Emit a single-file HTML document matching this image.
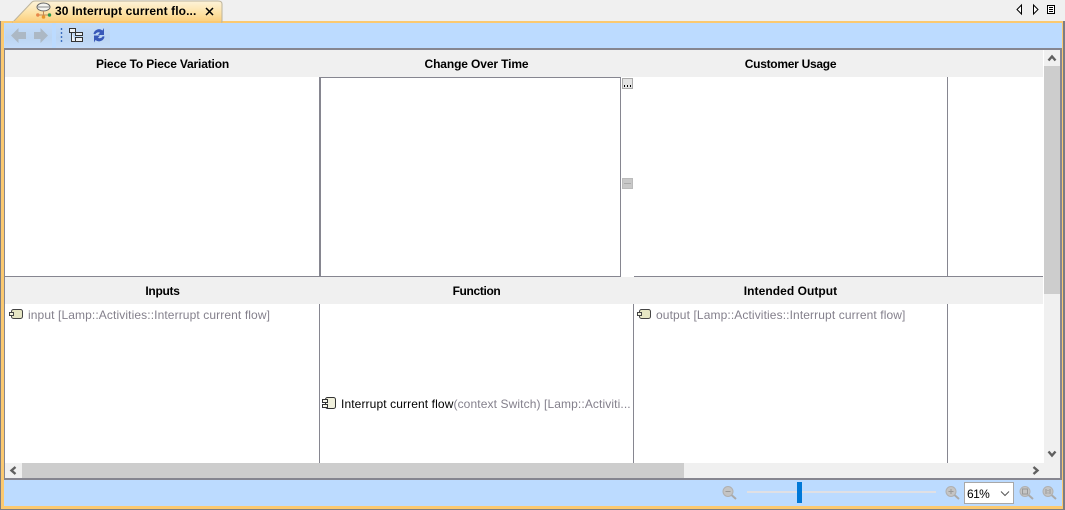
<!DOCTYPE html>
<html><head><meta charset="utf-8"><style>
html,body{margin:0;padding:0}
body{width:1065px;height:510px;overflow:hidden;position:relative;background:#f0f0f0;font-family:"Liberation Sans",sans-serif}
.a{position:absolute}
.h{position:absolute;font-weight:bold;font-size:12px;color:#000;text-align:center;line-height:14px;white-space:nowrap}
.t{position:absolute;font-size:12px;line-height:14px;color:#84808c;white-space:nowrap;letter-spacing:.11px}
.l{position:absolute;background:#868690}
svg{position:absolute;overflow:visible}
</style></head><body>
<!-- frame -->
<div class="a" style="left:0;top:21px;width:1065px;height:489px;background:#7c7c84"></div>
<div class="a" style="left:1px;top:21px;width:1062px;height:488px;background:#fbc970"></div>
<div class="a" style="left:4px;top:23px;width:1058px;height:483px;background:#bcdbff"></div>
<!-- tab -->
<svg style="left:0;top:0" width="240" height="24"><defs><linearGradient id="g" x1="0" y1="0" x2="0" y2="1"><stop offset="0" stop-color="#fdf3da"/><stop offset=".55" stop-color="#fde3a8"/><stop offset="1" stop-color="#fbcf7c"/></linearGradient></defs><path d="M13 22 L32 2 Q33 1 35 1 L218 1 Q222 1 222 4 L222 22 Z" fill="url(#g)" stroke="#bdb49c"/><path d="M13 21 L221 21 L221 23 L13 23Z" fill="#fbc970"/></svg>
<div class="a" style="left:55px;top:4px;font-size:12px;font-weight:bold;line-height:14px;white-space:nowrap;color:#000;letter-spacing:.1px">30 Interrupt current flo...</div>
<svg style="left:36px;top:2px" width="18" height="18"><ellipse cx="7.500" cy="5" rx="6.500" ry="4" fill="#f4f4f0" stroke="#666"/><path d="M2 5h11" stroke="#888"/><path d="M7.500 9v5M2 13h11" stroke="#c08a5a"/><circle cx="1.800" cy="13" r="1.700" fill="#e8884a"/><circle cx="13.500" cy="13" r="1.700" fill="#2d9a4e"/><circle cx="7.500" cy="15" r="1.800" fill="#e8962a"/></svg>
<svg style="left:205px;top:7px" width="9" height="9"><path d="M1 1L8 8M8 1L1 8" stroke="#000" stroke-width="1.500"/></svg>
<svg style="left:1016px;top:4px" width="40" height="11"><path d="M5.500 1v9L1 5.500z" fill="#fff" stroke="#000"/><path d="M17.500 1v9L22 5.500z" fill="#fff" stroke="#000"/><rect x="31.500" y="1.500" width="7" height="8" fill="#fff" stroke="#000"/><path d="M33 3.500h4M33 5.500h4M33 7.500h4" stroke="#000"/></svg>
<!-- toolbar -->
<div class="a" style="left:5px;top:23px;width:47px;height:25px;background:linear-gradient(#c4dcf8,#bcd5f2 60%,#c4dcfa)"></div>
<div class="a" style="left:56px;top:23px;width:54px;height:25px;background:linear-gradient(#c4dcf8,#bcd5f2 60%,#c4dcfa)"></div>
<svg style="left:10px;top:27px" width="40" height="17"><path d="M1 8.500L8.500 1V5H16V12H8.500V16Z" fill="#acb8c4"/><path d="M38 8.500L30.500 1V5H24V12H30.500V16Z" fill="#acb8c4"/></svg>
<svg style="left:60px;top:27px" width="50" height="17"><path d="M1.500 1v2M1.500 5v2M1.500 9v2M1.500 13v2" stroke="#3d6fc0" stroke-width="1.400"/><path d="M9.500 1.500h6v4h-6zM11.500 5.500v9h4M15.500 5.500h7v3h-7zM15.500 10.500h7v4h-7z" fill="#eef2f6" stroke="#333"/>
<path d="M33.500 7a5.500 5.500 0 0 1 9-3.500l1.500-2.500v7h-6l2-2.200a3.200 3.200 0 0 0-4.700 1.500zM44.500 9.500a5.500 5.500 0 0 1-9 3.500l-1.500 2.500v-7h6l-2 2.200a3.200 3.200 0 0 0 4.700-1.500z" fill="#3858b8"/></svg>
<!-- content -->
<div class="a" style="left:5px;top:50px;width:1056px;height:429px;background:#fff"></div>
<div class="a" style="left:4px;top:48px;width:1057px;height:2px;background:#868690"></div>
<div class="a" style="left:4px;top:48px;width:1px;height:432px;background:#868690"></div>
<div class="a" style="left:1060px;top:48px;width:2px;height:432px;background:#868690"></div>
<div class="a" style="left:4px;top:478px;width:1058px;height:2px;background:#868690"></div>
<!-- header rows -->
<div class="a" style="left:5px;top:50px;width:1038px;height:27px;background:#f0f0f0"></div>
<div class="a" style="left:5px;top:277px;width:1038px;height:27px;background:#f0f0f0"></div>
<div class="h" style="left:5px;top:57px;width:315px;letter-spacing:-.17px">Piece To Piece Variation</div>
<div class="h" style="left:320px;top:57px;width:313px;letter-spacing:-.12px">Change Over Time</div>
<div class="h" style="left:634px;top:57px;width:313px;letter-spacing:-.28px">Customer Usage</div>
<div class="h" style="left:5px;top:284px;width:315px;letter-spacing:-.3px">Inputs</div>
<div class="h" style="left:320px;top:284px;width:313px;letter-spacing:-.35px">Function</div>
<div class="h" style="left:634px;top:284px;width:313px;letter-spacing:.05px">Intended Output</div>
<!-- lines -->
<div class="l" style="left:319px;top:77px;width:2px;height:200px"></div>
<div class="l" style="left:320px;top:77px;width:301px;height:1px"></div>
<div class="l" style="left:620px;top:77px;width:1px;height:200px"></div>
<div class="l" style="left:947px;top:77px;width:1px;height:200px"></div>
<div class="l" style="left:5px;top:276px;width:616px;height:1px"></div>
<div class="l" style="left:634px;top:276px;width:409px;height:1px"></div>
<div class="l" style="left:319px;top:304px;width:1px;height:159px"></div>
<div class="l" style="left:633px;top:304px;width:1px;height:159px"></div>
<div class="l" style="left:947px;top:304px;width:1px;height:159px"></div>
<!-- split buttons -->
<div class="a" style="left:622px;top:78px;width:9px;height:9px;background:#e4e4e4;border:1px solid #aaa"></div>
<div class="a" style="left:624px;top:85px;width:1px;height:2px;background:#000"></div>
<div class="a" style="left:627px;top:85px;width:1px;height:2px;background:#000"></div>
<div class="a" style="left:630px;top:85px;width:1px;height:2px;background:#000"></div>
<div class="a" style="left:622px;top:178px;width:9px;height:9px;background:#c8c8c8;border:1px solid #bbb"></div>
<div class="a" style="left:624px;top:183px;width:7px;height:1px;background:#aaa"></div>
<!-- items -->
<svg style="left:9px;top:309px" width="15" height="12"><rect x="2.500" y="0.500" width="11" height="9" rx="2" fill="#e6e6c4" stroke="#444"/><rect x="0.500" y="3.500" width="4" height="3" fill="#f4f4e0" stroke="#444"/></svg>
<div class="t" style="left:28px;top:308px">input [Lamp::Activities::Interrupt current flow]</div>
<svg style="left:637px;top:309px" width="15" height="12"><rect x="2.500" y="0.500" width="11" height="9" rx="2" fill="#e6e6c4" stroke="#444"/><rect x="0.500" y="3.500" width="4" height="3" fill="#f4f4e0" stroke="#444"/></svg>
<div class="t" style="left:656px;top:308px">output [Lamp::Activities::Interrupt current flow]</div>
<svg style="left:322px;top:397px" width="15" height="13"><rect x="3.500" y="0.500" width="10" height="11" rx="2" fill="#f0f0dc" stroke="#333"/><rect x="0.500" y="2.500" width="5" height="3" fill="#f8f8ec" stroke="#333"/><rect x="0.500" y="7.500" width="5" height="3" fill="#f8f8ec" stroke="#333"/></svg>
<div class="t" style="left:341px;top:397px;width:290px;overflow:hidden"><span style="color:#000">Interrupt current flow</span>(context Switch) [Lamp::Activiti...</div>
<!-- v scrollbar -->
<div class="a" style="left:1044px;top:50px;width:16px;height:413px;background:#f0f0f0"></div>
<div class="a" style="left:1043px;top:50px;width:1px;height:413px;background:#fff"></div>
<div class="a" style="left:1044px;top:66px;width:16px;height:228px;background:#cdcdcd"></div>
<svg style="left:1047px;top:54px" width="11" height="8"><path d="M1.500 6.500L5 2.500L8.500 6.500" fill="none" stroke="#606060" stroke-width="2.400"/></svg>
<svg style="left:1047px;top:450px" width="11" height="8"><path d="M1.500 1.500L5 5.500L8.500 1.500" fill="none" stroke="#606060" stroke-width="2.400"/></svg>
<!-- h scrollbar -->
<div class="a" style="left:5px;top:463px;width:1055px;height:15px;background:#f0f0f0"></div>
<div class="a" style="left:22px;top:463px;width:662px;height:15px;background:#cdcdcd"></div>
<svg style="left:9px;top:466px" width="9" height="11"><path d="M6.500 1L2.500 4.500L6.500 8" fill="none" stroke="#606060" stroke-width="2.400"/></svg>
<svg style="left:1031px;top:466px" width="9" height="11"><path d="M2.500 1L6.500 4.500L2.500 8" fill="none" stroke="#606060" stroke-width="2.400"/></svg>
<!-- status -->
<svg style="left:722px;top:485px" width="16" height="16"><circle cx="6" cy="6.500" r="5" fill="#c4c4c4" stroke="#b0b0b0"/><path d="M3.500 6.500h5" stroke="#999"/><path d="M9.500 10l4.500 4" stroke="#aaa" stroke-width="2"/></svg>
<div class="a" style="left:747px;top:491px;width:189px;height:2px;background:#e0e0e4"></div>
<div class="a" style="left:797px;top:482px;width:5px;height:21px;background:#0078d7"></div>
<svg style="left:945px;top:485px" width="16" height="16"><circle cx="6" cy="6.500" r="5" fill="#c4c4c4" stroke="#b0b0b0"/><path d="M3.500 6.500h5M6 4v5" stroke="#999"/><path d="M9.500 10l4.500 4" stroke="#aaa" stroke-width="2"/></svg>
<div class="a" style="left:964px;top:482px;width:48px;height:20px;background:#fff;border:1px solid #a8a8a8"></div>
<div class="a" style="left:967px;top:487px;font-size:12px;line-height:14px;color:#000;letter-spacing:-.6px">61%</div>
<svg style="left:1000px;top:490px" width="11" height="7"><path d="M1 1.500L5 5.500L9 1.500" fill="none" stroke="#555"/></svg>
<svg style="left:1019px;top:485px" width="16" height="16"><circle cx="6" cy="6.500" r="5" fill="#c4c4c4" stroke="#b0b0b0"/><rect x="3.500" y="4" width="5" height="5" fill="none" stroke="#999"/><path d="M9.500 10l4.500 4" stroke="#aaa" stroke-width="2"/></svg>
<svg style="left:1042px;top:485px" width="16" height="16"><circle cx="6" cy="6.500" r="5" fill="#c4c4c4" stroke="#b0b0b0"/><path d="M4 4v5M6 5v1M6 7.500v1M8 4v5" stroke="#999"/><path d="M9.500 10l4.500 4" stroke="#aaa" stroke-width="2"/></svg>
</body></html>
